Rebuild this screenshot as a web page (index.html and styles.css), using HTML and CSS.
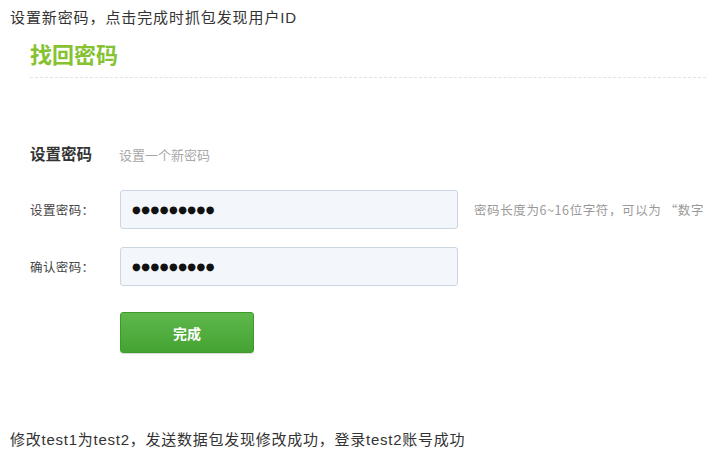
FILE: index.html
```html
<!DOCTYPE html>
<html lang="zh">
<head>
<meta charset="utf-8">
<link rel="stylesheet" href="styles.css">
</head>
<body>
<p class="note note-top">设置新密码，点击完成时抓包发现用户ID</p>
<div class="shot">
  <h1 class="title">找回密码</h1>
  <div class="divider"></div>
  <div class="section">
    <span class="section-name">设置密码</span>
    <span class="section-sub">设置一个新密码</span>
  </div>
  <div class="row row-first">
    <label class="label">设置密码：</label>
    <div class="input">●●●●●●●●●</div>
    <span class="hint">密码长度为6~16位字符，可以为 “数字</span>
  </div>
  <div class="row row-second">
    <label class="label">确认密码：</label>
    <div class="input">●●●●●●●●●</div>
  </div>
  <div class="actions">
    <button class="btn">完成</button>
  </div>
</div>
<p class="note note-bottom">修改test1为test2，发送数据包发现修改成功，登录test2账号成功</p>
</body>
</html>
```

FILE: styles.css
```css
html, body {
  margin: 0;
  padding: 0;
  background: #fff;
  overflow: hidden;
}
body {
  width: 706px;
  height: 465px;
  font-family: "Liberation Sans", "Noto Sans CJK SC", sans-serif;
}
.note {
  margin: 0;
  padding-left: 10px;
  font-size: 15px;
  line-height: 20px;
  color: #333;
  white-space: nowrap;
}
.note-top {
  margin-top: 8px;
  letter-spacing: 0.9px;
}
.note-bottom {
  letter-spacing: 0.75px;
}
.shot {
  padding-left: 30px;
  height: 402px;
  font-family: "Noto Sans CJK SC", sans-serif;
  overflow: hidden;
}
.title {
  margin: 12px 0 0 0;
  font-size: 22px;
  line-height: 26px;
  font-weight: 700;
  color: #86c232;
}
.divider {
  margin-top: 11px;
  border-top: 1px dashed #e2e2e2;
}
.section {
  margin-top: 64px;
  display: flex;
  align-items: baseline;
  height: 22px;
}
.section-name {
  font-size: 15.5px;
  font-weight: 700;
  color: #333;
  width: 89px;
}
.section-sub {
  font-size: 13px;
  color: #a8a8a8;
}
.row {
  display: flex;
  align-items: center;
  height: 39px;
}
.row-first {
  margin-top: 26px;
}
.row-second {
  margin-top: 18px;
}
.label {
  width: 90px;
  font-size: 12.5px;
  letter-spacing: 0.4px;
  color: #444;
}
.input {
  box-sizing: border-box;
  width: 338px;
  height: 39px;
  border: 1px solid #cbd6e2;
  border-radius: 3px;
  background: #f3f7fb;
  padding-left: 11px;
  display: flex;
  align-items: center;
  font-size: 10px;
  letter-spacing: 0.5px;
  color: #111;
  font-family: "DejaVu Sans", sans-serif;
}
.hint {
  margin-left: 16px;
  font-size: 12.5px;
  letter-spacing: 0.6px;
  color: #999;
  white-space: nowrap;
}
.actions {
  margin-top: 26px;
  padding-left: 90px;
}
.btn {
  width: 134px;
  height: 41px;
  border: 1px solid #3f9a2c;
  border-radius: 3px;
  background: linear-gradient(#5fb84c, #44a332);
  color: #fff;
  font-size: 14px;
  font-weight: 700;
  font-family: "Noto Sans CJK SC", sans-serif;
  box-shadow: 0 1px 1px rgba(0,0,0,0.15);
}
```
